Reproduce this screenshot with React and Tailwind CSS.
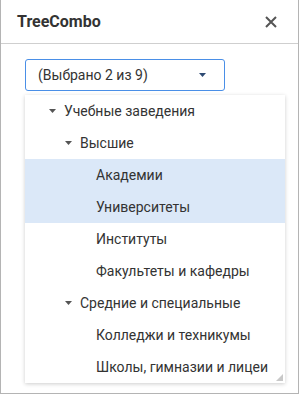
import React from "react";

const items = [
  { label: "Учебные заведения", level: 0, toggle: true },
  { label: "Высшие", level: 1, toggle: true },
  { label: "Академии", level: 2, selected: true },
  { label: "Университеты", level: 2, selected: true },
  { label: "Институты", level: 2 },
  { label: "Факультеты и кафедры", level: 2 },
  { label: "Средние и специальные", level: 1, toggle: true },
  { label: "Колледжи и техникумы", level: 2 },
  { label: "Школы, гимназии и лицеи", level: 2 },
];

const padClass = ["pl-4", "pl-8", "pl-12"];

function Caret() {
  return (
    <svg width="7" height="4" viewBox="0 0 7 4">
      <path d="M0 0H7L3.5 4Z" fill="#555" />
    </svg>
  );
}

export default function App() {
  return (
    <div
      className="w-[299px] h-[394px] bg-white border-x border-b border-[#b4b4b4] text-[#333]"
      style={{ fontFamily: "Roboto, 'Noto Sans', sans-serif" }}
    >
      <div className="h-[44px] border-b border-[#cfcfcf] flex items-center justify-between pl-[16px] pr-[21px]">
        <span className="text-[16px] font-bold text-[#333] leading-none">TreeCombo</span>
        <svg width="12" height="12" viewBox="0 0 12 12">
          <path d="M1 1L11 11M11 1L1 11" stroke="#555" strokeWidth="2" />
        </svg>
      </div>
      <div className="pt-[15px] pl-[24px]">
        <div className="w-[200px] h-[32px] border border-[#4a8fe7] rounded-[3px] flex items-center justify-between pl-[12px] pr-[18px]">
          <span className="text-[14px] text-[#333]">(Выбрано 2 из 9)</span>
          <svg width="7" height="4" viewBox="0 0 7 4">
            <path d="M0 0H7L3.5 4Z" fill="#2d4a73" />
          </svg>
        </div>
        <div className="relative mt-[4px] w-[260px] h-[288px] bg-white shadow-[0_1px_4px_rgba(0,0,0,0.2)]">
          {items.map((it, i) => (
            <div
              key={i}
              className={`h-[32px] flex items-center ${padClass[it.level]} ${it.selected ? "bg-[#dbe8f8]" : ""}`}
            >
              <span className="w-6 flex items-center justify-center -ml-[1px]">
                {it.toggle ? <Caret /> : null}
              </span>
              <span className="text-[14px] text-[#333] whitespace-nowrap">{it.label}</span>
            </div>
          ))}
          <svg className="absolute right-[2px] bottom-[2px]" width="7" height="7" viewBox="0 0 7 7">
            <path d="M7 0V7H0Z" fill="#c8c8c8" />
          </svg>
        </div>
      </div>
    </div>
  );
}
